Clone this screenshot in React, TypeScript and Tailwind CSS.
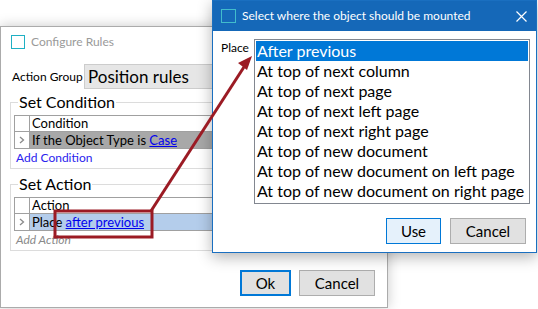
const font = { fontFamily: 'Lato, "Noto Sans", sans-serif' }

const placements = [
  'After previous',
  'At top of next column',
  'At top of next page',
  'At top of next left page',
  'At top of next right page',
  'At top of new document',
  'At top of new document on left page',
  'At top of new document on right page',
]

function RowArrow() {
  return (
    <svg width="6" height="8" viewBox="0 0 6 8" className="text-[#8a8a8a]">
      <path d="M1 1 L4.5 4 L1 7" fill="none" stroke="currentColor" strokeWidth="1.3" />
    </svg>
  )
}

function GridTable({ header, rowBg, children }: { header: string; rowBg: string; children: React.ReactNode }) {
  return (
    <div className="border border-[#a0a0a0] text-[13px] text-black whitespace-nowrap">
      <div className="flex h-[16px] border-b border-[#a0a0a0] leading-[15px]">
        <div className="w-[15px] shrink-0 border-r border-[#a0a0a0] bg-white" />
        <div className="flex-1 bg-white pl-[2px]">{header}</div>
      </div>
      <div className="flex h-[16px] leading-[16px]">
        <div className="w-[15px] shrink-0 border-r border-[#a0a0a0] bg-white flex items-center justify-center">
          <RowArrow />
        </div>
        <div className={`flex-1 pl-[2px] ${rowBg}`}>{children}</div>
      </div>
    </div>
  )
}

function GroupBox({ title, children }: { title: string; children: React.ReactNode }) {
  return (
    <fieldset className="border border-[#dcdcdc] px-[3px] pb-[1px]">
      <legend className="ml-[4px] px-[1px] text-[16px] leading-[20px] text-black">{title}</legend>
      <div className="mt-[3px]">{children}</div>
    </fieldset>
  )
}

function ConfigureRules() {
  return (
    <div className="absolute left-0 top-[26px] w-[388px] h-[282px] bg-white border border-[#ababab] shadow-[0_0_12px_rgba(0,0,0,0.22)] flex flex-col">
      <div className="h-[30px] flex items-center pl-[10px] gap-[6px] shrink-0">
        <div className="w-[14px] h-[14px] border border-[#1fb0c4]" />
        <span className="text-[12px] text-[#9a9a9a]">Configure Rules</span>
      </div>
      <div className="flex flex-col px-[9px] pt-[7px]">
        <div className="flex items-center h-[25px] pl-[2px]">
          <span className="text-[12px] w-[72px] whitespace-nowrap text-black">Action Group</span>
          <div className="flex-1 h-[25px] bg-[#e6e6e6] border border-[#cccccc] text-[17px] leading-[23px] pl-[3px] text-black">
            Position rules
          </div>
        </div>
        <div className="mt-[3px]">
          <GroupBox title="Set Condition">
            <GridTable header="Condition" rowBg="bg-[#a8a8a8]">
              If the Object Type is <span className="text-[#0000ee] underline">Case</span>
            </GridTable>
            <div className="text-[12px] leading-[17px] text-[#2a22ee] pl-[2px] pb-[1px]">Add Condition</div>
          </GroupBox>
        </div>
        <div className="mt-[5px]">
          <GroupBox title="Set Action">
            <GridTable header="Action" rowBg="bg-[#b4cdeb]">
              Place <span className="text-[#0000ee] underline">after previous</span>
            </GridTable>
            <div className="text-[12px] leading-[17px] italic text-[#8a8a8a] pl-[2px] pb-[1px]">Add Action</div>
          </GroupBox>
        </div>
        <div className="flex justify-end gap-[8px] mt-[19px] pr-[3px]">
          <button className="w-[51px] h-[26px] bg-[#e1e1e1] border-2 border-[#0078d7] text-[15px] text-black">Ok</button>
          <button className="w-[76px] h-[26px] bg-[#e1e1e1] border border-[#adadad] text-[15px] text-black">Cancel</button>
        </div>
      </div>
    </div>
  )
}

function SelectDialog() {
  return (
    <div className="absolute left-[212px] top-0 w-[325px] h-[253px] bg-white border border-[#1a6fc0] shadow-[0_4px_14px_rgba(0,0,0,0.3)] flex flex-col">
      <div className="h-[30px] bg-[#1568b8] flex items-center pl-[8px] shrink-0">
        <div className="w-[15px] h-[14px] border border-[#41bccc]" />
        <span className="ml-[6px] text-[12px] text-white">Select where the object should be mounted</span>
        <svg className="ml-auto mr-[9px]" width="11" height="11" viewBox="0 0 11 11">
          <path d="M0.5 0.5 L10.5 10.5 M10.5 0.5 L0.5 10.5" stroke="white" strokeWidth="1.2" />
        </svg>
      </div>
      <div className="flex pl-[8px] pr-[6px] pt-[8px]">
        <span className="text-[12px] leading-[18px] w-[33px] text-black">Place</span>
        <div className="flex-1 h-[165px] border border-[#828790] p-[1px]">
          {placements.map((p, i) => (
            <div
              key={p}
              className={`h-[20px] leading-[20px] text-[16px] pl-[1px] whitespace-nowrap ${i === 0 ? 'bg-[#0078d7] text-white' : 'text-black'}`}
            >
              {p}
            </div>
          ))}
        </div>
      </div>
      <div className="flex justify-end gap-[9px] pr-[10px] mt-[14px]">
        <button className="w-[55px] h-[26px] bg-[#e5f1fb] border border-[#0078d7] text-[15px] text-black">Use</button>
        <button className="w-[76px] h-[26px] bg-[#e1e1e1] border border-[#adadad] text-[15px] text-black">Cancel</button>
      </div>
    </div>
  )
}

function Annotation() {
  return (
    <svg className="absolute left-0 top-0 pointer-events-none" width="538" height="309" viewBox="0 0 538 309">
      <rect x="55" y="211" width="97" height="26" fill="none" stroke="#9b1b24" strokeWidth="3" />
      <line x1="151" y1="211" x2="244" y2="67" stroke="#9b1b24" strokeWidth="3" />
      <polygon points="252,56 238,63 247,70" fill="#9b1b24" />
    </svg>
  )
}

export default function App() {
  return (
    <div className="relative w-[538px] h-[309px] bg-white overflow-hidden" style={font}>
      <ConfigureRules />
      <SelectDialog />
      <Annotation />
    </div>
  )
}
